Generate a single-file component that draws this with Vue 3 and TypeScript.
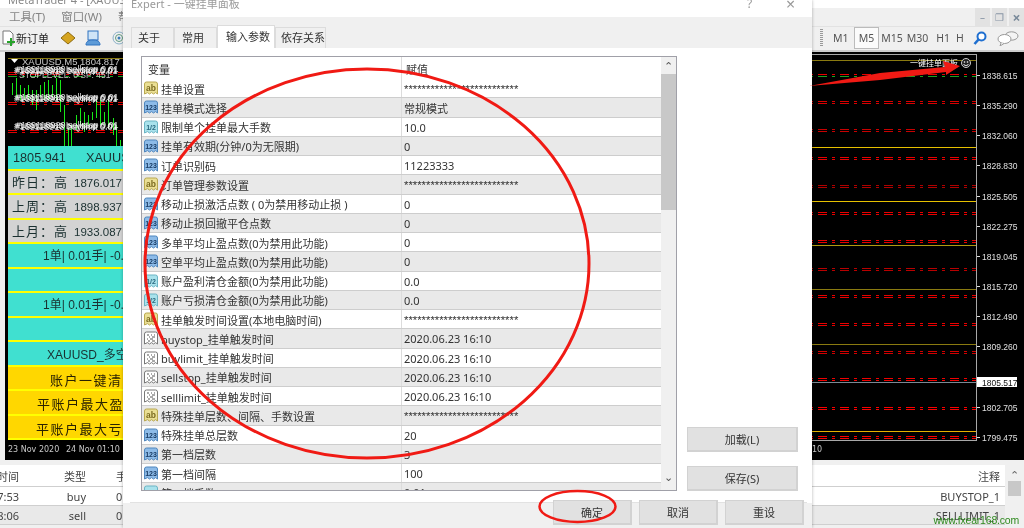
<script setup lang="ts">
type Kind = 'ab' | 'n' | 'f' | 'd'
interface Row { icon: Kind; name: string; value: string }
const stars = '**************************'
const rows: Row[] = [
  { icon: 'ab', name: '挂单设置', value: stars },
  { icon: 'n', name: '挂单模式选择', value: '常规模式' },
  { icon: 'f', name: '限制单个挂单最大手数', value: '10.0' },
  { icon: 'n', name: '挂单有效期(分钟/0为无限期)', value: '0' },
  { icon: 'n', name: '订单识别码', value: '11223333' },
  { icon: 'ab', name: '订单管理参数设置', value: stars },
  { icon: 'n', name: '移动止损激活点数 ( 0为禁用移动止损 )', value: '0' },
  { icon: 'n', name: '移动止损回撤平仓点数', value: '0' },
  { icon: 'n', name: '多单平均止盈点数(0为禁用此功能)', value: '0' },
  { icon: 'n', name: '空单平均止盈点数(0为禁用此功能)', value: '0' },
  { icon: 'f', name: '账户盈利清仓金额(0为禁用此功能)', value: '0.0' },
  { icon: 'f', name: '账户亏损清仓金额(0为禁用此功能)', value: '0.0' },
  { icon: 'ab', name: '挂单触发时间设置(本地电脑时间)', value: stars },
  { icon: 'd', name: 'buystop_挂单触发时间', value: '2020.06.23 16:10' },
  { icon: 'd', name: 'buylimit_挂单触发时间', value: '2020.06.23 16:10' },
  { icon: 'd', name: 'sellstop_挂单触发时间', value: '2020.06.23 16:10' },
  { icon: 'd', name: 'selllimit_挂单触发时间', value: '2020.06.23 16:10' },
  { icon: 'ab', name: '特殊挂单层数、间隔、手数设置', value: stars },
  { icon: 'n', name: '特殊挂单总层数', value: '20' },
  { icon: 'n', name: '第一档层数', value: '3' },
  { icon: 'n', name: '第一档间隔', value: '100' },
  { icon: 'f', name: '第一档手数', value: '0.01' },
]
const iconFill: Record<Kind, string> = { ab: '#eadf94', n: '#8dbbe8', f: '#a9e2ec', d: '#ffffff' }
const iconEdge: Record<Kind, string> = { ab: '#b9a850', n: '#4f86bd', f: '#6bb4c4', d: '#777777' }
const iconLabel: Record<Kind, string> = { ab: 'ab', n: '123', f: '1/2', d: '' }

const timeframes = ['M1', 'M5', 'M15', 'M30', 'H1', 'H']
const prices: [string, number][] = [
  ['1838.615', 76], ['1835.290', 106], ['1832.060', 136], ['1828.830', 166], ['1825.505', 197],
  ['1822.275', 227], ['1819.045', 257], ['1815.720', 287], ['1812.490', 317], ['1809.260', 347],
  ['1802.705', 408], ['1799.475', 438],
]
const dashed: [number, string][] = [
  [75, '#e80000'], [102, '#d80000'], [130, '#c80000'], [158, '#e80000'], [186, '#b00000'], [213, '#e80000'],
  [241, '#e80000'], [269, '#b80000'], [296, '#e80000'], [324, '#e80000'], [352, '#d00000'], [379, '#f00000'],
  [408, '#f80000'], [437, '#f80000'],
]
const solid: [number, string][] = [
  [60, '#8a7a10'], [147, '#e6c000'], [201, '#e6c000'], [245, '#b09a10'], [289, '#8a7a10'], [344, '#8a7a10'],
  [382, '#7c8894'], [431, '#e6b000'],
]
const candles: [number, number, number][] = [
  [12, 83, 95], [16, 78, 97], [20, 85, 100], [24, 88, 100], [28, 85, 100], [32, 90, 105], [36, 90, 110], [40, 85, 97],
  [44, 82, 100], [48, 80, 100], [52, 85, 97], [56, 78, 100], [60, 80, 112], [64, 105, 146], [68, 128, 146], [71, 125, 146],
  [76, 115, 130], [80, 108, 125], [84, 112, 132], [88, 115, 125], [92, 112, 120], [96, 100, 118], [100, 100, 125],
  [104, 112, 125], [108, 100, 128], [113, 118, 135], [116, 125, 146], [120, 140, 146],
]
const orderYs = [70, 98, 126]
const panels: { cls: string; text: string; price?: string }[] = [
  { cls: 'teal lead', text: '1805.941', price: 'XAUUSD' },
  { cls: 'grey', text: '昨日：高', price: '1876.017' },
  { cls: 'grey', text: '上周：高', price: '1898.937' },
  { cls: 'grey', text: '上月：高', price: '1933.087' },
  { cls: 'teal mid', text: '1单| 0.01手| -0.01' },
  { cls: 'teal mid', text: '' },
  { cls: 'teal mid', text: '1单| 0.01手| -0.01' },
  { cls: 'teal mid', text: '' },
  { cls: 'teal sym', text: 'XAUUSD_多空' },
  { cls: 'gold a', text: '账户一键清仓' },
  { cls: 'gold b', text: '平账户最大盈利' },
  { cls: 'gold c', text: '平账户最大亏损' },
]
</script>

<template>
  <div class="app">
    <div class="title">MetaTrader 4 - [XAUUSD,M5]</div>
    <div class="menu">
      <span>工具(T)</span><span>窗口(W)</span><span>帮助(H)</span>
      <div class="winbtns">
        <span class="wb">–</span><span class="wb">❐</span><span class="wb x">×</span>
      </div>
    </div>
    <div class="toolbar">
      <svg class="tool" width="13" height="16" viewBox="0 0 13 16">
        <path d="M1 1h7l3 3v10H1z" fill="#fff" stroke="#777" />
        <path d="M8 8h2v3h3v2h-3v3H8v-3H5v-2h3z" fill="#27a32b" />
      </svg>
      <span class="neworder">新订单</span>
      <svg class="book" width="16" height="14" viewBox="0 0 16 14">
        <path d="M1 7l7-6 7 6-7 6z" fill="#d6a520" stroke="#8d6a10" />
      </svg>
      <svg class="person" width="16" height="16" viewBox="0 0 16 16">
        <rect x="3" y="1" width="10" height="9" fill="#cfe4f7" stroke="#2f72c0" />
        <path d="M1 15c0-4 3-5 7-5s7 1 7 5z" fill="#5d9bd8" stroke="#2f72c0" />
      </svg>
      <svg class="signal" width="14" height="14" viewBox="0 0 14 14">
        <circle cx="7" cy="7" r="6" fill="none" stroke="#8ab0c8" />
        <circle cx="7" cy="7" r="3.5" fill="none" stroke="#5f9a80" />
        <circle cx="7" cy="7" r="1.5" fill="#3a7bb8" />
      </svg>
      <div class="tfs">
        <span class="grip"></span>
        <span v-for="t in timeframes" :key="t" class="tf" :class="{ on: t === 'M5' }">{{ t }}</span>
        <svg class="search" width="14" height="15" viewBox="0 0 14 15">
          <circle cx="8.5" cy="5.5" r="4" fill="#fff" stroke="#1f6fd0" stroke-width="2" />
          <path d="M5.5 8.5L1.5 13" stroke="#1f6fd0" stroke-width="2.6" />
        </svg>
        <svg class="chat" width="22" height="15" viewBox="0 0 22 15">
          <ellipse cx="14.5" cy="5" rx="6.5" ry="4.2" fill="#f4f4f4" stroke="#999" />
          <ellipse cx="7.5" cy="8" rx="6.5" ry="4.5" fill="#fff" stroke="#999" />
          <path d="M4 12l-1 3 4-2.5" fill="#fff" stroke="#999" />
        </svg>
      </div>
    </div>

    <div class="chart">
      <svg class="canvas" width="1019" height="408" viewBox="5 52 1019 408">
        <line x1="8" y1="58.5" x2="123" y2="58.5" stroke="#8a7a10" />
        <path d="M11 59h7l-3.5 4z" fill="#fff" />
        <text x="22" y="65" class="hd">XAUUSD,M5  1804.817 1806.1</text>
        <line x1="8" y1="76.5" x2="123" y2="76.5" stroke="#1fa01f" stroke-dasharray="9 5 3 5" />
        <g v-for="y in [72, 102, 130]" :key="y">
          <line x1="8" :y1="y + 0.5" x2="123" :y2="y + 0.5" stroke="#e00000" stroke-dasharray="9 5 3 5" />
          <line x1="8" :y1="y + 2.5" x2="123" :y2="y + 2.5" stroke="#e00000" stroke-dasharray="9 5 3 5" />
        </g>
        <line v-for="c in candles" :key="c[0]" :x1="c[0] + 0.5" :y1="c[1]" :x2="c[0] + 0.5" :y2="c[2]" stroke="#18e818" />
        <text x="19" y="78" class="hd2">STOPLEVEL: 0   SP: 451</text>
        <g v-for="y in orderYs" :key="'o' + y">
          <text x="14" :y="y + 3" class="ord">#169118980 buystop 0.01</text>
          <text x="15" :y="y + 4" class="ord">#169118918 buylimit 0.01</text>
          <text x="16" :y="y + 2" class="ord">#169118920 sellstop 0.01</text>
        </g>
        <text x="8" y="452" class="dt">23 Nov 2020</text>
        <text x="66" y="452" class="dt">24 Nov 01:10</text>
        <text x="812" y="452" class="dt">10</text>

        <g v-for="d in dashed" :key="'d' + d[0]">
          <line x1="812" :y1="d[0] - 0.5" x2="976" :y2="d[0] - 0.5" :stroke="d[1]" stroke-dasharray="9 5 3 5" stroke-dashoffset="-6" />
          <line x1="812" :y1="d[0] + 1.5" x2="976" :y2="d[0] + 1.5" :stroke="d[1]" stroke-dasharray="9 5 3 5" stroke-dashoffset="-6" />
        </g>
        <line x1="812" y1="76.5" x2="976" y2="76.5" stroke="#1fa01f" stroke-dasharray="9 5 3 5" stroke-dashoffset="-6" />
        <line v-for="s in solid" :key="'s' + s[0]" x1="812" :y1="s[0] + 0.5" x2="976" :y2="s[0] + 0.5" :stroke="s[1]" />
        <line x1="976.5" y1="54" x2="976.5" y2="441" stroke="#a8a8a8" />
        <line x1="812" y1="54.5" x2="976" y2="54.5" stroke="#a8a8a8" />
        <line x1="812" y1="440.5" x2="976" y2="440.5" stroke="#a8a8a8" />
        <g v-for="p in prices" :key="p[0]">
          <line x1="977" :y1="p[1] - 0.5" x2="980" :y2="p[1] - 0.5" stroke="#ddd" />
          <text x="982" :y="p[1] + 3" class="pr">{{ p[0] }}</text>
        </g>
        <rect x="977" y="377" width="40" height="10" fill="#fff" />
        <text x="982" y="386" class="pr dark">1805.517</text>
        <text x="910" y="66" class="lbl">一键挂单面板</text>
        <circle cx="966" cy="63" r="4.5" fill="#222" stroke="#ccc" />
        <path d="M963.5 64c1 2 4 2 5 0" fill="none" stroke="#fff" />
        <circle cx="964.5" cy="62" r="0.8" fill="#fff" />
        <circle cx="967.5" cy="62" r="0.8" fill="#fff" />
      </svg>
      <div class="panels">
        <div v-for="(p, i) in panels" :key="i" class="panel" :class="p.cls">
          <span>{{ p.text }}</span><span v-if="p.price" class="px">{{ p.price }}</span>
        </div>
      </div>
    </div>

    <div class="orders">
      <div class="ohead">
        <span class="c1">时间</span><span class="c2">类型</span><span class="c3">手数</span><span class="c4">注释</span>
      </div>
      <div class="orow">
        <span class="c1">7:53</span><span class="c2">buy</span><span class="c3">0.01</span><span class="c4">BUYSTOP_1</span>
      </div>
      <div class="orow alt">
        <span class="c1">8:06</span><span class="c2">sell</span><span class="c3">0.01</span><span class="c4">SELLLIMIT_1</span>
      </div>
      <div class="oscroll"><span class="oup">⌃</span><span class="othumb"></span></div>
    </div>

    <div class="dialog">
      <div class="dtitle">
        <span>Expert - 一键挂单面板</span>
        <span class="help">?</span>
        <span class="close">×</span>
      </div>
      <div class="tabs">
        <span class="tab t1">关于</span><span class="tab t2">常用</span><span class="tab t3 active">输入参数</span><span class="tab t4">依存关系</span>
      </div>
      <div class="body">
        <div class="list">
          <div class="grid">
            <div class="lhead"><span class="cv">变量</span><span class="cn">赋值</span></div>
            <div v-for="(r, i) in rows" :key="r.name" class="row" :class="{ alt: i % 2 === 1 }">
              <div class="cv">
                <svg class="ico" width="16" height="15" viewBox="0 0 16 15">
                  <path d="M1.5 3q0-2 2-2h9q2 0 2 2v10l-2-1.4-2 1.4-2-1.4-2 1.4-2-1.4-3 1.4z" :fill="iconFill[r.icon]" :stroke="iconEdge[r.icon]" />
                  <text v-if="r.icon !== 'd'" x="8" y="10" text-anchor="middle" class="ilabel" :class="r.icon">{{ iconLabel[r.icon] }}</text>
                  <path v-else d="M4 4h2M8 4h1M11 4h1M6 6h1M9 6h3M4 8h1M7 8h3M5 10h2M9 10h3" stroke="#555" fill="none" />
                </svg>
                <span>{{ r.name }}</span>
              </div>
              <div class="cn" :class="{ st: r.value === stars }">{{ r.value }}</div>
            </div>
          </div>
          <div class="vbar">
            <span class="arrow">⌃</span>
            <span class="thumb"></span>
            <span class="arrow down">⌄</span>
          </div>
        </div>
        <div class="side">
          <button class="btn">加载(L)</button>
          <button class="btn">保存(S)</button>
        </div>
      </div>
      <div class="foot">
        <button class="btn b2">确定</button>
        <button class="btn b2">取消</button>
        <button class="btn b2">重设</button>
      </div>
    </div>

    <svg class="marks" width="1024" height="528" viewBox="0 0 1024 528">
      <ellipse cx="367" cy="263.5" rx="222" ry="194.5" fill="none" stroke="#f01a14" stroke-width="3" />
      <ellipse cx="577.5" cy="506.5" rx="38" ry="15.5" fill="none" stroke="#f01a14" stroke-width="2.5" />
      <path d="M809 86L880 73 945 67 943 61 960 66 946 75 946 72 880 80z" fill="#f01a14" />
    </svg>
    <div class="water">www.fxear168.com</div>
  </div>
</template>

<style scoped>
.app {
  position: relative;
  width: 1024px;
  height: 528px;
  overflow: hidden;
  display: flex;
  flex-direction: column;
  background: #f0f0f0;
  font-family: "Noto Sans", "Noto Sans CJK SC", sans-serif;
  color: #333;
  filter: blur(0.35px);
}
.title { height: 8px; background: #fff; font-size: 11px; line-height: 0; color: #888; padding-left: 8px; overflow: hidden; }
.menu { height: 19px; display: flex; align-items: center; gap: 16px; padding: 0 0 2px 9px; font-size: 11.5px; color: #858585; border-bottom: 1px solid #e2e2e2; box-sizing: border-box; }
.winbtns { margin: 0 0 -2px auto; display: flex; gap: 2px; align-self: stretch; }
.wb { width: 15px; background: #e2e2e2; display: flex; align-items: center; justify-content: center; color: #8895a5; font-size: 10px; }
.wb.x { color: #7a8a9a; font-size: 14px; font-weight: bold; }
.toolbar { height: 25px; display: flex; align-items: center; font-size: 11px; color: #222; padding: 0 0 1px 2px; border-bottom: 2px solid #ccc; box-sizing: border-box; }
.tool { margin-right: 1px; }
.neworder { width: 44px; }
.book { margin-right: 9px; }
.person { margin-right: 11px; }
.tfs { margin-left: auto; display: flex; align-items: center; height: 100%; font-size: 10.5px; color: #555; }
.grip { width: 3px; height: 18px; margin-right: 5px; background: repeating-linear-gradient(#999 0 1px, #f0f0f0 1px 2px); }
.tf { width: 25.6px; text-align: center; line-height: 20px; box-sizing: border-box; }
.tf.on { background: #fbfbfb; border: 1px solid #bbb; }
.tf:last-of-type { width: 8px; overflow: hidden; }
.search { margin: 0 10px 0 9px; }
.chat { margin-right: 5px; }

.chart { position: relative; height: 408px; margin-left: 5px; background: #000; flex: none; }
.canvas { position: absolute; inset: 0; display: block; }
.hd { font: 9.5px "Liberation Sans", sans-serif; fill: #c8c8c8; white-space: pre; }
.hd2 { font: 8.5px "Liberation Sans", sans-serif; fill: #c8c8c8; white-space: pre; }
.ord { font: 9px "Liberation Sans", sans-serif; fill: #fff; opacity: 0.85; }
.dt { font: 8px "DejaVu Sans", sans-serif; fill: #c8c8c8; }
.pr { font: 8.5px "Liberation Sans", sans-serif; fill: #e0e0e0; }
.pr.dark { fill: #111; }
.lbl { font: 8px "Noto Sans CJK SC", sans-serif; fill: #fff; }
.panels { position: absolute; left: 3px; top: 94px; width: 118px; display: flex; flex-direction: column; }
.panel { height: 22.5px; border-bottom: 2px solid #ffff00; white-space: nowrap; overflow: hidden; font: 12px/24px "Liberation Sans", "Noto Sans CJK SC", sans-serif; color: #1a3030; }
.panel.teal { background: #40e0d0; }
.panel.grey { background: #d3d3d3; padding-left: 4px; font-size: 13px; letter-spacing: 1px; line-height: 23px; }
.panel.grey .px { font-size: 11.5px; margin-left: 6px; letter-spacing: 0; }
.panel.gold { background: #ffd700; font-size: 13px; letter-spacing: 1.5px; line-height: 27px; color: #2a2200; }
.panel.lead { padding-left: 5px; font-size: 12.7px; }
.panel.lead .px { margin-left: 20px; }
.panel.mid { padding-left: 35px; }
.panel.sym { padding-left: 39px; line-height: 27px; }
.panel.a { padding-left: 42px; }
.panel.b { padding-left: 29px; }
.panel.c { padding-left: 28px; }

.orders { flex: 1; margin-top: 5px; position: relative; font: 11px "Noto Sans", "Noto Sans CJK SC", sans-serif; color: #444; }
.ohead, .orow { display: flex; height: 22px; align-items: center; background: #fff; border-bottom: 1px solid #cfcfcf; box-sizing: border-box; margin-right: 19px; }
.orow { height: 19px; }
.orow.alt { background: #e9e9e9; }
.c1 { width: 19px; display: flex; justify-content: flex-end; white-space: nowrap; flex: none; }
.c2 { width: 67px; text-align: right; flex: none; }
.c3 { width: 32px; text-align: left; flex: none; padding-left: 30px; box-sizing: content-box; white-space: nowrap; }
.c4 { margin-left: auto; margin-right: 5px; }
.oscroll { position: absolute; right: 0; top: 3px; bottom: 0; width: 19px; display: flex; flex-direction: column; align-items: center; color: #666; font-size: 11px; line-height: 13px; }
.othumb { width: 13px; height: 15px; background: #c8c8c8; }

.dialog { position: absolute; left: 123px; top: 0; width: 689px; height: 528px; background: #fff; display: flex; flex-direction: column; box-shadow: 0 0 3px rgba(0,0,0,.3); }
.dtitle { height: 17px; position: relative; padding-left: 8px; font-size: 11px; line-height: 8px; color: #9a9a9a; overflow: hidden; flex: none; }
.help { position: absolute; left: 624px; top: 0; font-size: 12px; }
.close { position: absolute; left: 663px; top: 0; font-size: 16px; }
.tabs { height: 31px; background: #f0f0f0; display: flex; align-items: flex-end; padding-left: 8px; flex: none; font-size: 11px; color: #333; }
.tab { height: 21px; line-height: 20px; background: #f0f0f0; border: 1px solid #dcdcdc; border-bottom: 0; box-sizing: border-box; white-space: nowrap; }
.t1 { width: 43px; padding-left: 6px; }
.t2 { width: 43px; padding-left: 7px; }
.t3 { width: 58px; padding-left: 8px; }
.t4 { width: 51px; padding-left: 5px; }
.tab.active { height: 23px; line-height: 22px; background: #fff; }
.body { flex: 1; margin: 0 5px 0 7px; background: #fff; display: flex; padding: 8px 0 11px 11px; min-height: 0; border-bottom: 1px solid #e2e2e2; }
.list { width: 536px; height: 100%; border: 1px solid #a0a0a8; box-sizing: border-box; display: flex; overflow: hidden; }
.grid { flex: 1; min-width: 0; font-size: 11px; color: #333; }
.lhead { display: flex; height: 22px; align-items: center; }
.lhead .cv { padding-left: 6px; }
.lhead .cn { padding-left: 4px; }
.row { display: flex; height: 19.25px; background: #fff; border-bottom: 1px solid #cdcdcd; box-sizing: border-box; align-items: center; }
.row.alt { background: #e9e9e9; }
.cv { width: 259px; flex: none; display: flex; align-items: center; gap: 2px; white-space: nowrap; overflow: hidden; padding-top: 1px; box-sizing: border-box; }
.lhead .cv { width: 259px; }
.cn { flex: 1; border-left: 1px solid #dcdcdc; padding: 1px 0 0 2px; align-self: stretch; display: flex; align-items: center; }
.cn.st { font: 11.3px "Liberation Sans", sans-serif; }
.ico { flex: none; margin-left: 1px; }
.ilabel { font: bold 7px "Liberation Sans", sans-serif; fill: #173a63; }
.ilabel.ab { font-size: 8.5px; fill: #7a6a20; }
.ilabel.f { fill: #2a6a80; }
.vbar { width: 15px; flex: none; background: #f0f0f0; display: flex; flex-direction: column; align-items: center; color: #555; font-size: 11px; line-height: 17px; }
.thumb { width: 100%; height: 136px; background: #c8c8c8; }
.arrow { height: 17px; }
.arrow.down { margin-top: auto; line-height: 8px; }
.side { width: 111px; margin-left: 10px; display: flex; flex-direction: column; justify-content: flex-end; gap: 14px; }
.btn { height: 25px; background: #e1e1e1; border: 1px solid #d2d2d2; border-width: 1px 2px 2px 1px; font: 11px "Noto Sans", "Noto Sans CJK SC", sans-serif; color: #333; padding: 0; }
.foot { height: 28px; flex: none; display: flex; justify-content: flex-end; gap: 7px; padding-right: 8px; margin-top: -3px; position: relative; background: linear-gradient(transparent 3px, #f0f0f0 3px); }
.b2 { width: 79px; }
.marks { position: absolute; left: 0; top: 0; pointer-events: none; }
.water { position: absolute; right: 5px; bottom: 2px; font: 10.5px "Liberation Sans", sans-serif; letter-spacing: -0.2px; color: #2f8a1f; }
</style>
